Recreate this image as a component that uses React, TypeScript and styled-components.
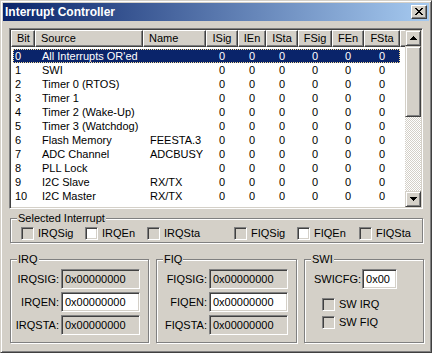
import React from 'react';
import styled, { createGlobalStyle } from 'styled-components';

const GlobalStyle = createGlobalStyle`
  html, body { margin: 0; padding: 0; background: #d4d0c8; }
  body {
    font-family: "Liberation Sans", Arial, sans-serif;
    font-size: 11px;
    color: #000;
  }
`;

const Window = styled.div`
  box-sizing: border-box;
  width: 432px;
  height: 353px;
  display: flex;
  flex-direction: column;
  background: #d4d0c8;
  border: 1px solid;
  border-color: #d4d0c8 #404040 #404040 #d4d0c8;
  box-shadow: inset 1px 1px #fff, inset -1px -1px #808080;
  padding: 2px;
`;

const TitleBar = styled.div`
  flex: none;
  height: 18px;
  display: flex;
  align-items: center;
  justify-content: space-between;
  padding: 0 2px;
  background: linear-gradient(to right, #0a246a, #a6caf0);
`;

const Title = styled.span`
  color: #fff;
  font-weight: bold;
  font-size: 12px;
  line-height: 18px;
`;

const CloseButton = styled.div`
  box-sizing: border-box;
  width: 16px;
  height: 14px;
  display: flex;
  align-items: center;
  justify-content: center;
  padding: 0 1px 1px 0;
  background: #d4d0c8;
  border: 1px solid;
  border-color: #fff #404040 #404040 #fff;
  box-shadow: inset -1px -1px #808080;
`;

const Body = styled.div`
  flex: 1;
  display: flex;
  flex-direction: column;
  padding: 7px 6px 0 6px;
`;

const ListBox = styled.div`
  box-sizing: border-box;
  height: 181px;
  flex: none;
  display: flex;
  background: #fff;
  border: 1px solid;
  border-color: #808080 #fff #fff #808080;
  box-shadow: inset 1px 1px #404040, inset -1px -1px #d4d0c8;
  padding: 1px;
`;

const ListMain = styled.div`
  flex: 1;
  overflow: hidden;
  display: flex;
  flex-direction: column;
`;

const HeaderRow = styled.div`
  display: flex;
  height: 17px;
  flex: none;
`;

const HeaderCell = styled.div<{ $w?: number; $center?: boolean }>`
  box-sizing: border-box;
  ${(p) => (p.$w ? `width: ${p.$w}px; flex: none;` : 'flex: 1;')}
  background: #d4d0c8;
  border: 1px solid;
  border-color: #fff #404040 #404040 #fff;
  box-shadow: inset -1px -1px #808080;
  padding: 0 0 0 5px;
  line-height: 15px;
  text-align: ${(p) => (p.$center ? 'center' : 'left')};
  ${(p) => (p.$center ? 'padding: 0;' : '')}
  white-space: nowrap;
  overflow: hidden;
`;

const Rows = styled.div`
  padding-top: 2px;
`;

const Row = styled.div<{ $selected?: boolean }>`
  display: flex;
  height: 14px;
  line-height: 14px;
  width: 387px;
  margin-left: 2px;
  box-sizing: border-box;
  white-space: nowrap;
  background: ${(p) => (p.$selected ? '#0a246a' : 'transparent')};
  color: ${(p) => (p.$selected ? '#fff' : '#000')};
  ${(p) => (p.$selected ? 'outline: 1px dotted #f5db95; outline-offset: -1px;' : '')}
`;

const Cell = styled.div<{ $w: number; $pad?: number; $center?: boolean }>`
  box-sizing: border-box;
  width: ${(p) => p.$w}px;
  flex: none;
  padding-left: ${(p) => p.$pad ?? 0}px;
  text-align: ${(p) => (p.$center ? 'center' : 'left')};
  overflow: hidden;
`;

const ScrollBar = styled.div`
  width: 16px;
  flex: none;
  display: flex;
  flex-direction: column;
`;

const ScrollButton = styled.div<{ $h?: number }>`
  box-sizing: border-box;
  height: ${(p) => p.$h ?? 16}px;
  flex: none;
  display: flex;
  align-items: center;
  justify-content: center;
  background: #d4d0c8;
  border: 1px solid;
  border-color: #d4d0c8 #404040 #404040 #d4d0c8;
  box-shadow: inset 1px 1px #fff, inset -1px -1px #808080;
`;

const Track = styled.div`
  flex: 1;
  display: flex;
  flex-direction: column;
  background-color: #fff;
  background-image: repeating-conic-gradient(#d4d0c8 0 25%, #fff 0 50%);
  background-size: 2px 2px;
`;

const Group = styled.fieldset<{ $w?: number; $h: number }>`
  box-sizing: border-box;
  margin: 0;
  padding: 0;
  min-inline-size: 0;
  ${(p) => (p.$w ? `width: ${p.$w}px; flex: none;` : '')}
  height: ${(p) => p.$h}px;
  border: 1px solid #808080;
  box-shadow: inset 1px 1px #fff, 1px 1px #fff;
`;

const Legend = styled.legend`
  margin-left: 6px;
  padding: 0 1px;
  line-height: 13px;
  font-size: 11px;
  background: #d4d0c8;
`;

const SelectedGroup = styled(Group)`
  margin: 3px 0 0 1px;
`;

const CheckRow = styled.div`
  display: flex;
  padding: 2px 0 0 10px;
`;

const CheckItem = styled.div<{ $w?: number }>`
  display: flex;
  align-items: center;
  gap: 4px;
  ${(p) => (p.$w ? `width: ${p.$w}px;` : '')}
  line-height: 13px;
`;

const Box = styled.span<{ $white?: boolean }>`
  box-sizing: border-box;
  width: 13px;
  height: 13px;
  flex: none;
  background: ${(p) => (p.$white ? '#fff' : '#d4d0c8')};
  border: 1px solid;
  border-color: #808080 #fff #fff #808080;
  box-shadow: inset 1px 1px #404040, inset -1px -1px #d4d0c8;
`;

const BottomRow = styled.div`
  display: flex;
  margin: 10px 0 0 1px;
  gap: 7px;
`;

const RegGrid = styled.div`
  display: grid;
  grid-template-columns: auto 79px;
  justify-content: end;
  column-gap: 2px;
  row-gap: 3px;
  padding: 3px 8px 0 0;
`;

const RegLabel = styled.div`
  text-align: right;
  line-height: 20px;
  white-space: nowrap;
`;

const Field = styled.div<{ $editable?: boolean; $w?: number }>`
  box-sizing: border-box;
  height: 20px;
  ${(p) => (p.$w ? `width: ${p.$w}px;` : '')}
  border: 1px solid;
  border-color: #808080 #fff #fff #808080;
  box-shadow: inset 1px 1px #404040, inset -1px -1px #d4d0c8;
  background: ${(p) => (p.$editable ? '#fff' : '#d4d0c8')};
  padding: 0 2px 0 3px;
  line-height: 18px;
  white-space: nowrap;
  overflow: hidden;
`;

const SwiBody = styled.div`
  display: flex;
  flex-direction: column;
  padding: 3px 0 0 9px;
`;

const SwiCfgRow = styled.div`
  display: flex;
  align-items: center;
  gap: 1px;
  line-height: 20px;
`;

const SwiChecks = styled.div`
  display: flex;
  flex-direction: column;
  gap: 5px;
  margin: 9px 0 0 8px;
`;

const columns = [
  { title: 'Bit', w: 24 },
  { title: 'Source', w: 108 },
  { title: 'Name', w: 63 },
  { title: 'ISig', w: 32, center: true },
  { title: 'IEn', w: 28, center: true },
  { title: 'ISta', w: 32, center: true },
  { title: 'FSig', w: 34, center: true },
  { title: 'FEn', w: 32, center: true },
  { title: 'FSta', w: 36, center: true },
];

const interrupts = [
  ['0', "All Interrupts OR'ed", ''],
  ['1', 'SWI', ''],
  ['2', 'Timer 0 (RTOS)', ''],
  ['3', 'Timer 1', ''],
  ['4', 'Timer 2 (Wake-Up)', ''],
  ['5', 'Timer 3 (Watchdog)', ''],
  ['6', 'Flash Memory', 'FEESTA.3'],
  ['7', 'ADC Channel', 'ADCBUSY'],
  ['8', 'PLL Lock', ''],
  ['9', 'I2C Slave', 'RX/TX'],
  ['10', 'I2C Master', 'RX/TX'],
];

const selectedChecks = [
  { label: 'IRQSig', w: 64 },
  { label: 'IRQEn', w: 62, white: true },
  { label: 'IRQSta', w: 87 },
  { label: 'FIQSig', w: 63 },
  { label: 'FIQEn', w: 62, white: true },
  { label: 'FIQSta' },
];

function UpArrow() {
  return (
    <svg width="7" height="4" viewBox="0 0 7 4" shapeRendering="crispEdges">
      <path d="M3 0h1v1h-1zM2 1h3v1h-3zM1 2h5v1h-5zM0 3h7v1h-7z" fill="#000" />
    </svg>
  );
}

function DownArrow() {
  return (
    <svg width="7" height="4" viewBox="0 0 7 4" shapeRendering="crispEdges">
      <path d="M0 0h7v1h-7zM1 1h5v1h-5zM2 2h3v1h-3zM3 3h1v1h-1z" fill="#000" />
    </svg>
  );
}

function CloseGlyph() {
  return (
    <svg width="8" height="7" viewBox="0 0 8 7" shapeRendering="crispEdges">
      <path
        d="M0 0h2v1h-2zM6 0h2v1h-2zM1 1h2v1h-2zM5 1h2v1h-2zM2 2h4v1h-4zM3 3h2v1h-2zM2 4h4v1h-4zM1 5h2v1h-2zM5 5h2v1h-2zM0 6h2v1h-2zM6 6h2v1h-2z"
        fill="#000"
      />
    </svg>
  );
}

function RegisterGroup({ title, prefix, w }: { title: string; prefix: string; w: number }) {
  return (
    <Group $w={w} $h={90}>
      <Legend>{title}</Legend>
      <RegGrid>
        <RegLabel>{prefix}SIG:</RegLabel>
        <Field>0x00000000</Field>
        <RegLabel>{prefix}EN:</RegLabel>
        <Field $editable>0x00000000</Field>
        <RegLabel>{prefix}STA:</RegLabel>
        <Field>0x00000000</Field>
      </RegGrid>
    </Group>
  );
}

export default function App() {
  return (
    <>
      <GlobalStyle />
      <Window>
        <TitleBar>
          <Title>Interrupt Controller</Title>
          <CloseButton>
            <CloseGlyph />
          </CloseButton>
        </TitleBar>
        <Body>
          <ListBox>
            <ListMain>
              <HeaderRow>
                {columns.map((c) => (
                  <HeaderCell key={c.title} $w={c.w} $center={c.center}>
                    {c.title}
                  </HeaderCell>
                ))}
                <HeaderCell />
              </HeaderRow>
              <Rows>
                {interrupts.map(([bit, source, name], i) => (
                  <Row key={bit} $selected={i === 0}>
                    <Cell $w={22} $pad={2}>{bit}</Cell>
                    <Cell $w={108} $pad={7}>{source}</Cell>
                    <Cell $w={63} $pad={7}>{name}</Cell>
                    {columns.slice(3).map((c) => (
                      <Cell key={c.title} $w={c.w} $center>
                        0
                      </Cell>
                    ))}
                  </Row>
                ))}
              </Rows>
            </ListMain>
            <ScrollBar>
              <ScrollButton>
                <UpArrow />
              </ScrollButton>
              <Track>
                <ScrollButton $h={71} />
              </Track>
              <ScrollButton>
                <DownArrow />
              </ScrollButton>
            </ScrollBar>
          </ListBox>

          <SelectedGroup $h={31}>
            <Legend>Selected Interrupt</Legend>
            <CheckRow>
              {selectedChecks.map((c) => (
                <CheckItem key={c.label} $w={c.w}>
                  <Box $white={c.white} />
                  {c.label}
                </CheckItem>
              ))}
            </CheckRow>
          </SelectedGroup>

          <BottomRow>
            <RegisterGroup title="IRQ" prefix="IRQ" w={139} />
            <RegisterGroup title="FIQ" prefix="FIQ" w={141} />
            <Group $w={120} $h={90}>
              <Legend>SWI</Legend>
              <SwiBody>
                <SwiCfgRow>
                  SWICFG:
                  <Field $editable $w={35}>0x00</Field>
                </SwiCfgRow>
                <SwiChecks>
                  <CheckItem>
                    <Box />
                    SW IRQ
                  </CheckItem>
                  <CheckItem>
                    <Box />
                    SW FIQ
                  </CheckItem>
                </SwiChecks>
              </SwiBody>
            </Group>
          </BottomRow>
        </Body>
      </Window>
    </>
  );
}
